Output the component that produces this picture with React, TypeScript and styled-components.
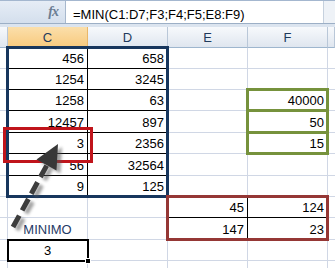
import styled, { createGlobalStyle } from "styled-components";

const GlobalStyle = createGlobalStyle`
  html, body {
    margin: 0;
    padding: 0;
    background: #ffffff;
  }
  body {
    width: 335px;
    height: 268px;
    overflow: hidden;
    font-family: "Liberation Sans", Arial, sans-serif;
  }
`;

const Screen = styled.div`
  position: relative;
  width: 335px;
  height: 268px;
  overflow: hidden;
  background: #ffffff;
`;

const FormulaBar = styled.div`
  display: flex;
  height: 22px;
  border-top: 1px solid #a4b7cf;
  border-bottom: 1px solid #9cafc6;
`;

const NameArea = styled.div`
  width: 65px;
  display: flex;
  align-items: center;
  justify-content: flex-end;
  padding-right: 7px;
  box-sizing: border-box;
  background: linear-gradient(#e6edf6, #d4dfed);
`;

const FxMark = styled.span`
  font-family: "Liberation Serif", "Times New Roman", serif;
  font-style: italic;
  font-weight: bold;
  font-size: 14px;
  letter-spacing: -1px;
  color: #6b7d93;
  margin-top: -1px;
`;

const FormulaInput = styled.div`
  flex: 1;
  background: #ffffff;
  border-left: 1px solid #a7b8cd;
  padding: 6px 0 0 7px;
  font-size: 13px;
  line-height: 16px;
  color: #000000;
  white-space: nowrap;
`;

const ExpandStrip = styled.div`
  width: 11px;
  background: #eef2f7;
  border-left: 1px solid #c6d1de;
`;

const Gap = styled.div`
  height: 3px;
  background: #dbe4ef;
`;

const rowHeights = [21, 21, 21, 22, 21, 22, 21, 21, 22, 21, 21];

const Sheet = styled.div`
  display: grid;
  grid-template-columns: 8px 80px 80px 80px 80px 7px;
  grid-template-rows: 21px ${rowHeights.map((h) => `${h}px`).join(" ")};
`;

const ColHead = styled.div<{ $col: number; $active?: boolean }>`
  grid-column: ${(p) => p.$col};
  grid-row: 1;
  box-sizing: border-box;
  display: flex;
  align-items: center;
  justify-content: center;
  padding-top: 1px;
  font-size: 13px;
  color: #1f3a5c;
  background: ${(p) =>
    p.$active
      ? "linear-gradient(#fbdfab, #f8ca7e)"
      : "linear-gradient(#f7f9fc, #dfe6ef)"};
  border-right: 1px solid ${(p) => (p.$active ? "#e9b76a" : "#b9c7d8")};
  border-bottom: 1px solid ${(p) => (p.$active ? "#f0a644" : "#9eb6ce")};
`;

const Cell = styled.div<{
  $col: number;
  $row: number;
  $dark: boolean;
  $last: boolean;
  $align: "flex-end" | "center";
  $tone?: string;
}>`
  grid-column: ${(p) => p.$col};
  grid-row: ${(p) => p.$row};
  box-sizing: border-box;
  display: flex;
  align-items: flex-end;
  justify-content: ${(p) => p.$align};
  padding: 0 3px 2px;
  font-size: 13px;
  line-height: 15px;
  color: ${(p) => p.$tone || "#000000"};
  white-space: nowrap;
  overflow: hidden;
  border-bottom: 1px solid ${(p) => (p.$dark ? "#000000" : "#d0d7e5")};
  border-right: ${(p) =>
    p.$last ? "none" : `1px solid ${p.$dark ? "#000000" : "#d0d7e5"}`};
`;

const Frame = styled.div<{ $area: string; $color: string }>`
  grid-area: ${(p) => p.$area};
  position: relative;
  z-index: 1;
  margin: -2px -1px -1px -2px;
  border: 3px solid ${(p) => p.$color};
  pointer-events: none;
`;

const ActiveCell = styled.div`
  grid-area: 11 / 2 / 12 / 3;
  position: relative;
  z-index: 2;
  margin: -1px;
  border: 2px solid #000000;
`;

const FillHandle = styled.span`
  position: absolute;
  right: -4px;
  bottom: -4px;
  width: 4px;
  height: 4px;
  background: #000000;
  border: 1px solid #ffffff;
`;

const Callout = styled.div`
  position: absolute;
  left: 3px;
  top: 127px;
  width: 90px;
  height: 36px;
  box-sizing: border-box;
  border: 3px solid #c0141b;
  z-index: 3;
`;

const ArrowLayer = styled.svg`
  position: absolute;
  left: 0;
  top: 0;
  z-index: 4;
  pointer-events: none;
`;

type CellDef = { v: string; center?: boolean; tone?: string };

const values: Record<string, CellDef> = {
  C1: { v: "456" },
  D1: { v: "658" },
  C2: { v: "1254" },
  D2: { v: "3245" },
  C3: { v: "1258" },
  D3: { v: "63" },
  F3: { v: "40000" },
  C4: { v: "12457" },
  D4: { v: "897" },
  F4: { v: "50" },
  C5: { v: "3" },
  D5: { v: "2356" },
  F5: { v: "15" },
  C6: { v: "56" },
  D6: { v: "32564" },
  C7: { v: "9" },
  D7: { v: "125" },
  E8: { v: "45" },
  F8: { v: "124" },
  C9: { v: "MINIMO", center: true, tone: "#1f3a66" },
  E9: { v: "147" },
  F9: { v: "23" },
  C10: { v: "3", center: true },
};

const letters = ["B", "C", "D", "E", "F", "G"];

const isDark = (letter: string, row: number) =>
  ((letter === "C" || letter === "D") && row <= 7) ||
  ((letter === "E" || letter === "F") && (row === 8 || row === 9));

function Arrow() {
  const shaft = { x1: 13, y1: 227, x2: 47, y2: 165 };
  const head = "58,144 56.5,170.5 36.5,159.5";
  return (
    <ArrowLayer width={335} height={268} viewBox="0 0 335 268">
      <defs>
        <filter id="soft" x="-20%" y="-20%" width="140%" height="140%">
          <feGaussianBlur stdDeviation="1.8" />
        </filter>
      </defs>
      <g filter="url(#soft)" opacity="0.55" transform="translate(4 3)">
        <line {...shaft} stroke="#555" strokeWidth="5" strokeDasharray="13 6" />
        <polygon points={head} fill="#555" />
      </g>
      <line {...shaft} stroke="#3d3d3d" strokeWidth="5" strokeDasharray="13 6" />
      <polygon points={head} fill="#383838" />
    </ArrowLayer>
  );
}

export default function App() {
  const cells = [];
  for (let r = 1; r <= rowHeights.length; r++) {
    letters.forEach((letter, i) => {
      const def = values[`${letter}${r}`];
      cells.push(
        <Cell
          key={`${letter}${r}`}
          $col={i + 1}
          $row={r + 1}
          $dark={isDark(letter, r)}
          $last={letter === "G"}
          $align={def?.center ? "center" : "flex-end"}
          $tone={def?.tone}
        >
          {def?.v}
        </Cell>
      );
    });
  }

  return (
    <Screen>
      <GlobalStyle />
      <FormulaBar>
        <NameArea>
          <FxMark>fx</FxMark>
        </NameArea>
        <FormulaInput>=MIN(C1:D7;F3;F4;F5;E8:F9)</FormulaInput>
        <ExpandStrip />
      </FormulaBar>
      <Gap />
      <Sheet>
        {letters.map((letter, i) => (
          <ColHead key={letter} $col={i + 1} $active={letter === "C"}>
            {letter === "B" || letter === "G" ? "" : letter}
          </ColHead>
        ))}
        {cells}
        {/* range borders sit on the gridlines */}
        <Frame $area="2 / 2 / 9 / 4" $color="#17365d" />
        <Frame $area="4 / 5 / 5 / 6" $color="#76923c" />
        <Frame $area="5 / 5 / 6 / 6" $color="#76923c" />
        <Frame $area="6 / 5 / 7 / 6" $color="#76923c" />
        <Frame $area="9 / 4 / 11 / 6" $color="#953735" />
        <ActiveCell>
          <FillHandle />
        </ActiveCell>
      </Sheet>
      <Callout />
      <Arrow />
    </Screen>
  );
}
